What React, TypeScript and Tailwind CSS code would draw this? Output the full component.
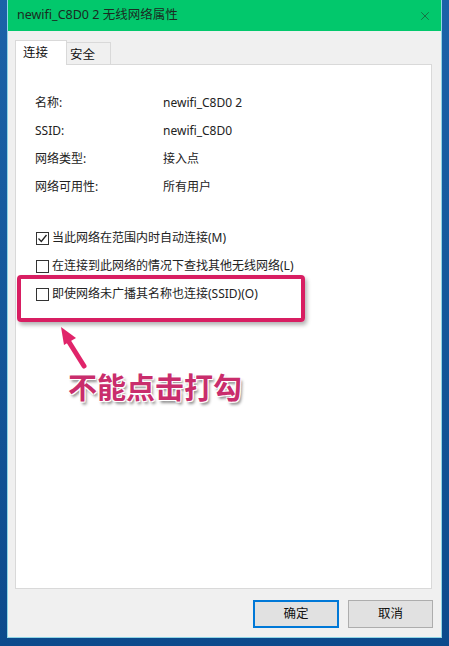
import { X } from 'lucide-react';

const ui = "font-['Segoe_UI','Noto_Sans','Noto_Sans_CJK_SC',sans-serif]";

const props = [
  { label: '名称:', value: 'newifi_C8D0 2' },
  { label: 'SSID:', value: 'newifi_C8D0' },
  { label: '网络类型:', value: '接入点' },
  { label: '网络可用性:', value: '所有用户' },
];

const options = [
  { label: '当此网络在范围内时自动连接(M)', checked: true },
  { label: '在连接到此网络的情况下查找其他无线网络(L)', checked: false },
  { label: '即使网络未广播其名称也连接(SSID)(O)', checked: false },
];

const CheckBox = ({ checked }: { checked: boolean }) => (
  <span className="w-[13px] h-[13px] border border-[#333] bg-white flex items-center justify-center shrink-0">
    {checked && (
      <svg width="11" height="11" viewBox="0 0 11 11">
        <path d="M1.5 5.5 L4.3 8.5 L9.5 2" fill="none" stroke="#222" strokeWidth="1.3" />
      </svg>
    )}
  </span>
);

export default function App() {
  return (
    <div className={`relative w-[449px] h-[646px] overflow-hidden bg-gradient-to-b from-[#1b63a8] to-[#0c4a8c] px-[7px] pb-[8px] ${ui}`}>
      {/* dialog window */}
      <div className="w-[435px] h-[638px] flex flex-col border-x border-b border-[#8fd6e6] bg-[#f0f0f0]">
        {/* title bar */}
        <div className="h-[31px] shrink-0 bg-[#02c86c] flex items-center pl-[9px] pr-[9px]">
          <span className="text-[12.5px] text-[#1c2b22] flex-1">newifi_C8D0 2 无线网络属性</span>
          <X className="w-[14px] h-[14px] text-[#1d5a3a]" strokeWidth={1.3} />
        </div>

        {/* body */}
        <div className="flex-1 flex flex-col px-[7px] pt-[9px]">
          {/* tabs */}
          <div className="flex items-end h-[24px] relative z-10">
            <div className="w-[52px] h-[25px] -mb-px bg-white border-x border-t border-[#d9d9d9] flex items-center pl-[7px] text-[12.5px] text-[#111]">
              连接
            </div>
            <div className="w-[44px] h-[22px] bg-[#f0f0f0] border-r border-t border-[#d9d9d9] flex items-center pl-[3px] pt-[3px] text-[12.5px] text-[#111]">
              安全
            </div>
          </div>

          {/* content panel */}
          <div className="h-[525px] w-[417px] bg-white border border-[#d9d9d9] pt-[24px] pl-[19px]">
            <div className="flex flex-col">
              {props.map((p) => (
                <div key={p.label} className="h-[28px] flex items-center text-[12px] text-[#222]">
                  <span className="w-[128px]">{p.label}</span>
                  <span>{p.value}</span>
                </div>
              ))}
            </div>

            <div className="flex flex-col mt-[23px]">
              {options.map((o) => (
                <div key={o.label} className="h-[28px] flex items-center gap-[3px] pl-[1px] text-[12px] text-[#222]">
                  <CheckBox checked={o.checked} />
                  <span>{o.label}</span>
                </div>
              ))}
            </div>
          </div>

          {/* buttons */}
          <div className="flex justify-end gap-[9px] pr-[1px] pt-[11px]">
            <button className="w-[86px] h-[28px] bg-[#e1e1e1] border-2 border-[#0078d7] text-[12.5px] text-[#111]">
              确定
            </button>
            <button className="w-[85px] h-[28px] bg-[#e1e1e1] border border-[#adadad] text-[12.5px] text-[#111]">
              取消
            </button>
          </div>
        </div>
      </div>

      {/* annotation: highlight box */}
      <div className="absolute left-[17px] top-[275px] w-[288px] h-[47px] border-[4px] border-[#d81e62] rounded-[4px] shadow-[2px_3px_4px_rgba(0,0,0,0.3)]" />

      {/* annotation: arrow */}
      <svg className="absolute left-[55px] top-[322px]" width="40" height="50" viewBox="0 0 40 50">
        <path d="M29 44 L14 20" stroke="#e0246a" strokeWidth="5" strokeLinecap="round" />
        <path d="M6 5 L21 16 L9 23 Z" fill="#e0246a" />
      </svg>

      {/* annotation: caption */}
      <div className="absolute left-[68px] top-[372px] text-[29px] leading-none font-semibold text-[#c92d6c] font-['Noto_Sans_CJK_SC',sans-serif] [text-shadow:1px_1px_0_#fff,-1px_-1px_0_#fff,1px_-1px_0_#fff,-1px_1px_0_#fff,2px_3px_3px_rgba(0,0,0,0.45)]">
        不能点击打勾
      </div>
    </div>
  );
}
